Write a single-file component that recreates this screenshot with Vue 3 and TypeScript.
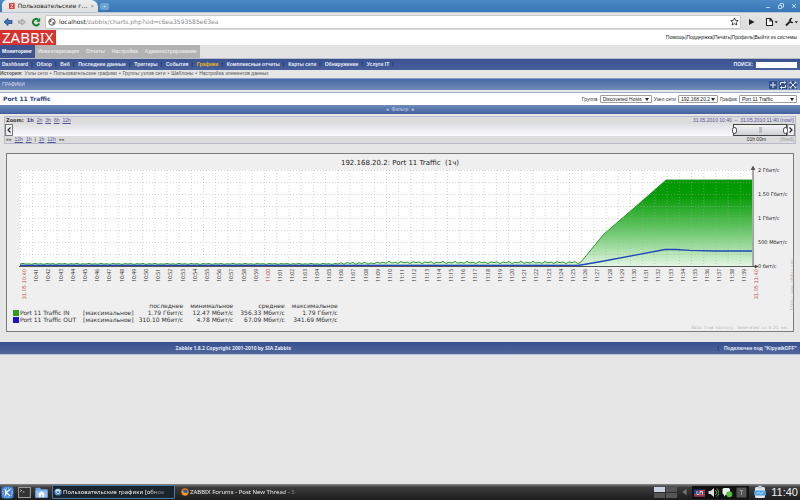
<script setup lang="ts">
import { ref } from 'vue'

const sections = ['Инвентаризация', 'Отчеты', 'Настройка', 'Администрирование']
const pages = [
  'Dashboard', 'Обзор', 'Веб', 'Последние данные', 'Триггеры', 'События',
  'Графики', 'Комплексные отчеты', 'Карты сети', 'Обнаружение', 'Услуги IT',
]
const history = ['Узлы сети', 'Пользовательские графики', 'Группы узлов сети', 'Шаблоны', 'Настройка элементов данных']
const account = ['Помощь', 'Поддержка', 'Печать', 'Профиль', 'Выйти из системы']
const zooms = ['2h', '3h', '6h', '12h']
const search = ref('')

const legend = [
  { color: '#2f9a1c', name: 'Port 11 Traffic IN', fn: '[максимальное]', last: '1.79 Гбит/с', min: '12.47 Мбит/с', avg: '356.33 Мбит/с', max: '1.79 Гбит/с' },
  { color: '#2010c8', name: 'Port 11 Traffic OUT', fn: '[максимальное]', last: '310.10 Мбит/с', min: '4.78 Мбит/с', avg: '67.09 Мбит/с', max: '341.69 Мбит/с' },
]

interface Tick { x: number; text: string; major: boolean }
const STEP = 12.2
const ticks: Tick[] = Array.from({ length: 61 }, (_, i) => {
  const minute = 40 + i
  const time = minute < 60 ? `10:${minute}` : `11:${String(minute - 60).padStart(2, '0')}`
  const edge = i === 0 || i === 60
  return { x: 26 + i * STEP, text: edge ? `31.05 ${time}` : time, major: edge || i === 20 }
})
const columns = Array.from({ length: 60 }, (_, i) => 20.5 + i * STEP)
const rows = Array.from({ length: 8 }, (_, i) => 170.5 + i * 12)
const levels = [
  { y: 172, text: '2 Гбит/с' },
  { y: 196, text: '1.50 Гбит/с' },
  { y: 220, text: '1 Гбит/с' },
  { y: 244, text: '500 Мбит/с' },
  { y: 268, text: '0 бит/с' },
]

// Idle traffic: a low ripple that gets stronger in the second half of the period
const idle: string[] = []
for (let x = 20, i = 0; x < 580; x += 3, i++) {
  const base = x < 340 ? 263.9 : x < 380 ? 263.2 : 262.5
  const swing = x < 340 ? 0.5 : 1.1
  idle.push(`${x},${(base + (i % 2 ? -swing : swing) * (0.6 + 0.4 * Math.sin(i * 1.7))).toFixed(1)}`)
}
const incoming = [...idle, '581,262', '604,234', '634,208', '666,180', '752,180'].join(' ')
const outgoing = '20,265.5 578,265.5 604,261 665,249.5 676,249.5 690,250.3 715,251 752,251'
</script>

<template>
  <div class="screen">
    <header class="browser">
      <div class="tabs">
        <div class="tab">
          <svg class="fav" viewBox="0 0 6 6"><rect width="6" height="6" fill="#d8342c" /><path d="M1.4 1.6h3L1.6 4.4h3" stroke="#fff" stroke-width=".7" fill="none" /></svg>
          <span class="tab-title">Пользовательские г…</span>
          <button class="bare tab-close" aria-label="Закрыть вкладку">×</button>
        </div>
        <button class="bare new-tab" aria-label="Новая вкладка">+</button>
        <div class="window-buttons">
          <button class="bare" aria-label="Свернуть"><svg viewBox="0 0 6 6"><path d="M1 4.5h4" /></svg></button>
          <button class="bare" aria-label="Развернуть"><svg viewBox="0 0 6 6"><path d="M.5 2.5h3v3h-3zM2 2V.6h3.5v3.5H4" /></svg></button>
          <button class="bare" aria-label="Закрыть"><svg viewBox="0 0 6 6"><path d="M1 1l4 4M5 1L1 5" /></svg></button>
        </div>
      </div>
      <div class="toolbar">
        <button class="bare" aria-label="Назад"><svg class="nav" viewBox="0 0 10 10"><path d="M5 1.5v2h4v3H5v2L1 5z" fill="#3f74b8" stroke="#24477e" stroke-width=".8" /></svg></button>
        <button class="bare" aria-label="Вперед"><svg class="nav" viewBox="0 0 10 10"><path d="M5 2v1.8H1.5v2.4H5V8l3.5-3z" fill="#c4c4c4" stroke="#9b9b9b" stroke-width=".8" /></svg></button>
        <button class="bare" aria-label="Обновить"><svg class="nav" viewBox="0 0 10 10"><path d="M8.2 6.4A3.3 3.3 0 1 1 7 2.4" fill="none" stroke="#19802a" stroke-width="2" /><path d="M9.2.7v4H5z" fill="#19802a" /></svg></button>
        <div class="omnibox">
          <svg class="globe" viewBox="0 0 8 8"><circle cx="4" cy="4" r="3.2" fill="#fff" stroke="#444" stroke-width=".9" /><path d="M2 1.6l1.8.6L3 4l-1.6.6M4.6 3.6l2 .6-1 2-1.2-.8z" fill="#666" /></svg>
          <span class="url"><b>localhost</b>/zabbix/charts.php?sid=c6ea3593585e63ea</span>
          <svg class="star" viewBox="0 0 10 10"><path d="M5 1l1.2 2.7 2.9.3-2.2 2 .7 2.9L5 7.4 2.4 8.9 3.1 6 .9 4l2.9-.3z" fill="#fff" stroke="#222" stroke-width=".9" /></svg>
        </div>
        <div class="tools">
          <button class="bare" aria-label="Перейти"><svg class="tool" viewBox="0 0 13 10"><path d="M4 2l5.5 3L4 8z" fill="#222" /></svg></button>
          <button class="bare" aria-label="Страница"><svg class="tool" viewBox="0 0 13 10"><path d="M1.5 1.5h4L7.5 4v4.500h-6zM5 1.5V4h2.5" fill="#fff" stroke="#222" stroke-width="1.1" /><path d="M9.5 4.2h3.4l-1.7 2z" fill="#222" /></svg></button>
          <button class="bare" aria-label="Настройки"><svg class="tool" viewBox="0 0 13 10"><path d="M1 8.5l4-4" stroke="#222" stroke-width="1.8" /><path d="M7.5 1A2.6 2.6 0 1 0 8.6 5.3L6.3 4.6 5.9 3z" fill="#222" /><path d="M9.6 4.2H13l-1.7 2z" fill="#222" /></svg></button>
        </div>
      </div>
    </header>

    <div class="brand-row">
      <a class="logo" href="#">ZABBIX</a>
      <nav class="account">
        <template v-for="(item, i) in account" :key="item"><span v-if="i">|</span><a href="#">{{ item }}</a></template>
      </nav>
    </div>

    <nav class="sections">
      <a class="section current" href="#">Мониторинг</a>
      <div class="others"><a v-for="s in sections" :key="s" href="#">{{ s }}</a></div>
    </nav>

    <nav class="pages">
      <a v-for="p in pages" :key="p" href="#" :class="{ active: p === 'Графики' }">{{ p }}</a>
      <label class="search">ПОИСК:<input v-model="search" type="text" /></label>
    </nav>

    <nav class="history">
      <b>История:</b>
      <template v-for="(h, i) in history" :key="h"><i v-if="i">•</i><a href="#">{{ h }}</a></template>
    </nav>

    <div class="page-head">
      <span>ГРАФИКИ</span>
      <div class="head-icons">
        <button class="bare" aria-label="Добавить"><svg viewBox="0 0 8 8"><path d="M4 1v6M1 4h6" /></svg></button>
        <button class="bare" aria-label="Сбросить"><svg viewBox="0 0 8 8"><path d="M1.500 4V1.500H6.500M5 .5l1.500 1L5 2.500M6.500 4v2.500H1.500M3 5.500l-1.500 1L3 7.500" /></svg></button>
        <button class="bare" aria-label="На весь экран"><svg viewBox="0 0 8 8"><path d="M1 1l6 6M7 1L1 7M1 2.500V1h1.500M5.500 1H7v1.500M7 5.500V7H5.500M2.500 7H1V5.500" /></svg></button>
      </div>
    </div>

    <div class="title-row">
      <h1>Port 11 Traffic</h1>
      <form class="filters" @submit.prevent>
        <label for="group">Группа</label>
        <span class="pick group"><select id="group"><option>Discovered Hosts</option></select></span>
        <label for="host">Узел сети</label>
        <span class="pick host"><select id="host"><option>192.168.20.2</option></select></span>
        <label for="graph">График</label>
        <span class="pick graph"><select id="graph"><option>Port 11 Traffic</option></select></span>
      </form>
    </div>
    <button class="bare filter-bar">◂&nbsp; Фильтр &nbsp;◂</button>

    <section class="timeline">
      <div class="line">
        <div class="links"><b>Zoom:</b><b class="on">1h</b><a v-for="z in zooms" :key="z" href="#">{{ z }}</a></div>
        <div class="period">31.05.2010 10:40 &nbsp;–&nbsp; 31.05.2010 11:40 (now!)</div>
      </div>
      <div class="track">
        <button class="bare arrow" aria-label="Раньше"><svg viewBox="0 0 6 10"><path d="M4.5 2.5L2 5l2.5 2.5" /></svg></button>
        <div class="rail">
          <div class="thumb"><i class="knob"></i><span class="grip"></span><i class="knob"></i></div>
        </div>
        <button class="bare arrow" aria-label="Позже"><svg viewBox="0 0 6 10"><path d="M1.5 2.5L4 5 1.5 7.5" /></svg></button>
      </div>
      <div class="line">
        <div class="links"><span>««</span><a href="#">12h</a><a href="#">1h</a><span>|</span><a href="#">1h</a><a href="#">12h</a><span>»»</span></div>
        <div class="span"><span>01h 00m</span><a href="#">(fixed)</a></div>
      </div>
    </section>

    <main class="graph-box">
      <svg class="plot" viewBox="7 154 786 148" role="img" aria-label="Port 11 Traffic">
        <defs>
          <linearGradient id="fill" gradientUnits="userSpaceOnUse" x1="0" y1="180" x2="0" y2="266">
            <stop offset="0" stop-color="#009900" />
            <stop offset=".18" stop-color="#049b04" />
            <stop offset=".6" stop-color="#6cc86c" />
            <stop offset="1" stop-color="#e2f6e2" />
          </linearGradient>
        </defs>
        <text class="caption" x="400" y="164.5" text-anchor="middle">192.168.20.2: Port 11 Traffic&nbsp; (1ч)</text>
        <rect x="20" y="170" width="733" height="96" fill="#fff" />
        <polygon :points="`20,266 ${incoming} 752,266`" fill="url(#fill)" />
        <g class="grid">
          <line v-for="c in columns" :key="c" :x1="c" :x2="c" y1="170" y2="266" />
          <line v-for="r in rows" :key="r" x1="20" x2="752" :y1="r" :y2="r" />
        </g>
        <rect x="20" y="264.5" width="560" height="1.5" fill="#9ec4e0" />
        <polyline :points="incoming" class="in" />
        <polyline :points="outgoing" class="out" />
        <path d="M19 266.500h737M753 166.500V266" stroke="#555" fill="none" />
        <path d="M751 169.500l2-3 2 3zM755 265l3 1.500-3 1.500z" fill="#555" stroke="#333" stroke-width=".5" />
        <text v-for="l in levels" :key="l.y" class="level" x="758" :y="l.y">{{ l.text }}</text>
        <text
          v-for="t in ticks" :key="t.text" :class="['tick', { major: t.major, wide: t.text.length > 5 }]"
          :transform="`translate(${t.x} 269) rotate(-90)`" text-anchor="end"
        >{{ t.text }}</text>
        <text class="site" transform="translate(793 310) rotate(-90)">http://www.zabbix.com</text>
      </svg>
      <table class="legend">
        <thead>
          <tr><th></th><th></th><th>последнее</th><th>минимальное</th><th>среднее</th><th>максимальное</th></tr>
        </thead>
        <tbody>
          <tr v-for="row in legend" :key="row.name">
            <td><i class="swatch" :style="{ background: row.color }"></i>{{ row.name }}</td>
            <td>{{ row.fn }}</td><td>{{ row.last }}</td><td>{{ row.min }}</td><td>{{ row.avg }}</td><td>{{ row.max }}</td>
          </tr>
        </tbody>
      </table>
      <p class="note">Data from history. Generated in 0.21 sec</p>
    </main>

    <footer class="foot">
      <span class="copy">Zabbix 1.8.2 Copyright 2001-2010 by SIA Zabbix</span>
      <span class="user"><i>|</i>Подключен под "KipyatkOFF"</span>
    </footer>

    <div class="taskbar">
      <button class="bare" aria-label="Меню"><svg class="launch" viewBox="0 0 14 14"><rect x=".5" y=".5" width="13" height="13" rx="3" fill="#3d7fd0" /><circle cx="7" cy="7" r="5" fill="none" stroke="#8fc0f4" stroke-width="1.6" stroke-dasharray="1.6 1" /><path d="M5 3.500v7M9.500 3.800L5.600 7l4 3.500" fill="none" stroke="#fff" stroke-width="1.5" /></svg></button>
      <button class="bare" aria-label="Терминал"><svg class="launch" viewBox="0 0 14 14"><rect x=".7" y="1.5" width="12.6" height="11" fill="#333" stroke="#aaa" stroke-width="1" /><path d="M2.500 4l1.500 1-1.500 1M5 6.500h2" fill="none" stroke="#ddd" stroke-width=".8" /></svg></button>
      <button class="bare" aria-label="Папка"><svg class="launch" viewBox="0 0 14 14"><path d="M.5 2h5l1 1.500h7v9H.5z" fill="#6fa8ea" /><path d="M.5 5h13v7.500H.5z" fill="#8fbdf4" /><path d="M7 5.500L3 9h1.200v3h2V9.500h1.600V12h2V9H11z" fill="#fff" /></svg></button>
      <button class="bare task focus">
        <svg viewBox="0 0 8 8"><circle cx="4" cy="4" r="3.6" fill="#5a8fc8" /><path d="M.8 3.200C2.200.6 5.800.6 7.200 3L4 3.200z" fill="#d6e4f2" /><circle cx="4" cy="4.2" r="1.5" fill="#2962aa" stroke="#fff" stroke-width=".7" /></svg>
        <span>Пользовательские графики [обнов</span>
      </button>
      <button class="bare task">
        <svg viewBox="0 0 8 8"><circle cx="4" cy="4" r="3.7" fill="#e8741c" /><circle cx="4.3" cy="3.7" r="2.2" fill="#2e5ea8" /><path d="M.6 3C2 3 2.400 4.600 4 5c1.200.2 2-.4 2.500-1 .3 2-1 3.300-2.500 3.300S.8 6 .6 3z" fill="#f4a02c" /></svg>
        <span>ZABBIX Forums - Post New Thread - S</span>
      </button>
      <div class="tray">
        <div class="pager"><i class="here"></i><i></i><i></i><i></i></div>
        <svg class="t-arrow" viewBox="0 0 6 8"><path d="M5.500 0v8L.5 4z" fill="#777" /></svg>
        <div class="status">
          <svg viewBox="0 0 11 11"><rect y="2.5" width="11" height="7" fill="#27408c" /><path d="M4.500 3.500H11M4.500 5.500H11M0 7.500h11M0 9h11" stroke="#d8382c" stroke-width="1.2" /><path d="M3 4v3.500h2M6 7.500V4.500h2.500v3" fill="none" stroke="#fff" stroke-width=".8" /></svg>
          <svg viewBox="0 0 11 11"><path d="M.5 4h2L6 1v9L2.500 7h-2z" fill="#ddd" /><path d="M7.500 3c1.500 1.500 1.500 3.500 0 5M9 1.500c2.200 2.500 2.200 5.500 0 8" fill="none" stroke="#5fb35a" stroke-width="1" /></svg>
          <svg viewBox="0 0 11 11"><rect x=".5" y="1" width="7.5" height="6.5" rx="1.5" fill="#e8f2e8" /><circle cx="7.3" cy="7.3" r="3" fill="#5cba3c" /><path d="M2 7v2.500L4.500 7z" fill="#e8f2e8" /></svg>
          <svg viewBox="0 0 11 11"><rect x=".5" y=".5" width="10" height="10" fill="#555" /><path d="M5.500 3v5M4 3.500h3" stroke="#999" stroke-width="1" /></svg>
        </div>
        <svg class="clip" viewBox="0 0 12 14"><rect x="1" y="2" width="10" height="11" rx="1.5" fill="#dfe5ea" /><rect x="4" y=".5" width="4" height="3" rx="1" fill="#b9c4cc" /><rect x="0" y="5.5" width="12" height="5" rx="1" fill="#4d9fe0" /><path d="M2.500 9l2-2 2 2 3-2" fill="none" stroke="#fff" stroke-width=".7" /></svg>
        <time class="clock">11:40</time>
      </div>
    </div>
  </div>
</template>

<style>
body {
  background: #e6e6e6;
}
</style>

<style scoped>
.screen {
  min-height: 100vh;
  display: flex;
  flex-direction: column;
  font: 5px/7px 'Liberation Sans', sans-serif;
  color: #333;
  background: #e6e6e6;
  white-space: nowrap;
}
a {
  color: inherit;
  text-decoration: none;
}
i {
  font-style: normal;
}
svg {
  display: block;
}
.bare {
  border: 0;
  padding: 0;
  margin: 0;
  background: none;
  font: inherit;
  color: inherit;
}

/* Browser chrome */
.tabs {
  display: flex;
  align-items: center;
  height: 12px;
  padding-left: 2px;
  background: linear-gradient(#4b8ac4, #3a76b6);
}
.tab {
  display: flex;
  align-items: center;
  gap: 3px;
  width: 96px;
  height: 12px;
  box-sizing: border-box;
  padding: 0 4px 0 7px;
  border-radius: 5px 7px 0 0;
  background: linear-gradient(#eeeeee, #dedede);
}
.fav {
  width: 6px;
  height: 6px;
}
.tab-title {
  flex: 1;
  font: 6px/10px 'DejaVu Sans', sans-serif;
  color: #222;
}
.tab-close {
  font-size: 6px;
  color: #888;
}
.new-tab {
  width: 9px;
  height: 7px;
  margin-left: 2px;
  border-radius: 2px;
  background: #6ea3d4;
  color: #dcecf8;
  line-height: 6px;
}
.window-buttons {
  display: flex;
  gap: 7px;
  margin-left: auto;
  padding-right: 3px;
}
.window-buttons svg {
  width: 6px;
  height: 6px;
  fill: none;
  stroke: #c4dcf2;
  stroke-width: 0.9;
}
.toolbar {
  display: flex;
  align-items: center;
  gap: 4px;
  height: 15px;
  padding: 1px 2px 1px 3px;
  border-top: 1px solid #b9c6d4;
  background: linear-gradient(#e4e4e4, #dcdcdc);
}
.toolbar .nav {
  width: 10px;
  height: 10px;
}
.omnibox {
  display: flex;
  align-items: center;
  flex: 1;
  gap: 3px;
  height: 12px;
  padding: 0 1px 0 2px;
  border: 1px solid #c8c8c8;
  border-radius: 2px;
  background: #fff;
  font: 6px/12px 'DejaVu Sans', sans-serif;
  color: #888;
}
.omnibox b {
  font-weight: 400;
  color: #222;
}
.globe {
  width: 8px;
  height: 8px;
}
.star {
  width: 9px;
  height: 9px;
  margin-left: auto;
}
.tools {
  display: flex;
  gap: 7px;
}
.tool {
  width: 13px;
  height: 10px;
}

/* Site header */
.brand-row {
  display: flex;
  justify-content: space-between;
  align-items: center;
  height: 15px;
  background: #fff;
}
.logo {
  padding: 0 2px;
  background: #d8322e;
  color: #fff;
  font: 15px/15px 'Noto Sans', sans-serif;
}
.account {
  padding-right: 3px;
  color: #222;
}
.sections {
  display: flex;
  height: 13px;
  border-bottom: 1px solid #b4bccc;
  background: #e3e3e3;
  font: bold 5px/13px 'Liberation Sans', sans-serif;
  color: #e6e6e6;
}
.section.current {
  padding: 0 3px 0 2px;
  background: #3d5490;
  color: #fff;
}
.others {
  display: flex;
  gap: 7px;
  padding: 0 3px;
  background: #b2b2b2;
}
.pages {
  display: flex;
  align-items: center;
  height: 11px;
  background: linear-gradient(#3a5390, #47609c);
  font: bold 5px/11px 'Liberation Sans', sans-serif;
  color: #e8ecf6;
  padding: 0 3px 0 2px;
}
.pages > a::after {
  content: '|';
  margin: 0 4px 0 3px;
  color: #1d2f5e;
}
.pages .active {
  color: #e8b820;
}
.search {
  display: flex;
  align-items: center;
  gap: 3px;
  margin-left: auto;
}
.search input {
  width: 41px;
  height: 6px;
  border: 0;
  padding: 0;
  background: #fff;
  font: inherit;
}
.history {
  display: flex;
  gap: 2px;
  height: 7px;
  color: #555;
}
.page-head {
  display: flex;
  justify-content: space-between;
  align-items: center;
  height: 11px;
  margin-top: 1px;
  padding: 0 3px 0 2px;
  border-top: 1px solid #8b9dc6;
  background: linear-gradient(#496aa6, #7089b8);
  color: #d6def0;
}
.head-icons {
  display: flex;
  gap: 2px;
}
.head-icons svg {
  width: 8px;
  height: 8px;
  background: #334f8c;
  fill: none;
  stroke: #e4ecfa;
  stroke-width: 1;
}
.title-row {
  display: flex;
  justify-content: space-between;
  align-items: center;
  height: 12px;
  margin-top: 2px;
  padding: 0 3px;
  border-top: 1px solid #9fb0cf;
  background: #fff;
}
h1 {
  margin: 0;
  font: bold 6px/12px 'DejaVu Sans', sans-serif;
  color: #33497f;
}
.filters {
  display: flex;
  align-items: center;
  gap: 2px;
}
.pick {
  position: relative;
  display: flex;
}
.pick::after {
  content: '';
  position: absolute;
  right: 3px;
  top: 3px;
  border: 2px solid transparent;
  border-top: 3px solid #222;
  border-bottom: 0;
  pointer-events: none;
}
.pick select {
  appearance: none;
  width: 100%;
  height: 8px;
  padding: 0 2px;
  border: 1px solid #9c9c9c;
  border-radius: 1px;
  background: #fff;
  font: inherit;
  line-height: 6px;
  color: #222;
}
.pick.group {
  width: 52px;
}
.pick.host {
  width: 40px;
}
.pick.graph {
  width: 58px;
}
.filter-bar {
  height: 9px;
  background: linear-gradient(#6f8bbb, #44609c);
  color: #c2d0ea;
  text-align: center;
}

/* Time line */
.timeline {
  margin: 2px 4px 0;
  border: 1px solid #b9b9cc;
  background: #dcdcdc;
  font-size: 5px;
}
.line {
  display: flex;
  justify-content: space-between;
  align-items: center;
  height: 7px;
  padding: 0 1px;
  color: #333;
}
.links {
  display: flex;
  gap: 3px;
}
.links b {
  font: bold 5px/7px 'DejaVu Sans', sans-serif;
}
.links .on {
  color: #2f3f78;
}
.links a {
  color: #55559a;
  text-decoration: underline;
}
.period {
  color: #55559a;
}
.track {
  display: flex;
  height: 12px;
  background: linear-gradient(#dfe0e4, #fbfbfb);
}
.arrow {
  width: 8px;
  border: 1px solid #777;
  background: #eee;
}
.arrow svg {
  width: 6px;
  height: 10px;
  fill: none;
  stroke: #222;
  stroke-width: 1.1;
}
.rail {
  display: flex;
  flex: 1;
  justify-content: flex-end;
}
.thumb {
  display: flex;
  align-items: center;
  justify-content: space-between;
  width: 54px;
  box-sizing: border-box;
  border: 1px solid #444;
  background: linear-gradient(#f4f4f6, #cfd0d6);
}
.knob {
  width: 3px;
  height: 5px;
  margin: 0 -2px;
  border: 1px solid #444;
  border-radius: 3px;
  background: #fff;
}
.grip {
  width: 3px;
  height: 6px;
  background: #bbb;
}
.span {
  display: flex;
  gap: 14px;
}
.span a {
  color: #999;
}

/* Graph */
.graph-box {
  margin: 9px 6px 0;
  border: 1px solid #7c7c7c;
  background: #efefef;
  font-family: 'DejaVu Sans', sans-serif;
}
.plot {
  width: 100%;
  overflow: visible;
}
.caption {
  font-size: 7px;
  fill: #222;
}
.grid line {
  stroke: #a8a8a8;
  stroke-width: 1;
  stroke-opacity: 0.5;
  stroke-dasharray: 1 2;
}
.in {
  fill: none;
  stroke: #2f9a2f;
  stroke-width: 1;
}
.out {
  fill: none;
  stroke: #2148b4;
  stroke-width: 1.3;
}
.level {
  font-size: 5px;
  fill: #222;
}
.tick {
  font: 5px 'Noto Sans', sans-serif;
  fill: #333;
}
.tick.wide {
  font-family: 'DejaVu Sans', sans-serif;
}
.tick.major {
  fill: #c04444;
}
.site {
  font: 4px 'DejaVu Sans Mono', monospace;
  fill: #b8b8b8;
}
.legend {
  border-collapse: collapse;
  margin-left: 6px;
  font-size: 6px;
  line-height: 7px;
  color: #333;
}
.legend th,
.legend td {
  padding: 0 0 0 7px;
  font-weight: 400;
  text-align: right;
}
.legend td:first-child {
  padding: 0;
  text-align: left;
}
.legend td:nth-child(2) {
  text-align: left;
}
.legend td:nth-child(3) {
  padding-left: 5px;
}
.swatch {
  display: inline-block;
  width: 6px;
  height: 6px;
  margin-right: 1px;
  vertical-align: -1px;
}
.note {
  margin: 0;
  padding: 2px 5px 0;
  text-align: right;
  font: 4px/6px 'DejaVu Sans Mono', monospace;
  color: #b4b4b4;
}
.foot {
  display: grid;
  grid-template-columns: 7fr 5fr;
  margin-top: 10px;
  border-bottom: 1px solid #b8c2d8;
  background: linear-gradient(#364f8c, #4f689e);
  font: bold 5px/12px 'Noto Sans', sans-serif;
  color: #e2e8f4;
}
.copy {
  text-align: center;
}
.user {
  padding-right: 3px;
  text-align: right;
  font-family: 'Liberation Sans', sans-serif;
}
.user i {
  margin-right: 5px;
  color: #1d2f5e;
}

/* Desktop panel */
.taskbar {
  display: flex;
  align-items: center;
  gap: 4px;
  height: 16px;
  margin-top: auto;
  padding: 0 2px 0 1px;
  background: linear-gradient(#8a8a8a, #3c3c3c 20%, #1c1c1c);
  color: #eee;
}
.launch {
  width: 13px;
  height: 13px;
}
.task {
  display: flex;
  align-items: center;
  gap: 1px;
  width: 123px;
  height: 14px;
  box-sizing: border-box;
  padding: 0 2px 0 1px;
  border: 1px solid transparent;
  font: 6px/12px 'Noto Sans', sans-serif;
}
.task svg {
  flex: none;
  width: 8px;
  height: 8px;
}
.task span {
  -webkit-mask-image: linear-gradient(90deg, #000 85%, rgba(0, 0, 0, 0.3));
  mask-image: linear-gradient(90deg, #000 85%, rgba(0, 0, 0, 0.3));
}
.task.focus {
  border-color: #4a7aa0;
  border-radius: 1px;
  background: #1a242c;
}
.tray {
  display: flex;
  align-items: center;
  gap: 5px;
  margin-left: auto;
}
.pager {
  display: grid;
  grid-template-columns: 11px 11px;
  gap: 1px;
}
.pager i {
  height: 5px;
  background: #555;
}
.pager .here {
  background: #c8d2e0;
}
.t-arrow {
  width: 5px;
  height: 8px;
}
.status {
  display: flex;
  gap: 3px;
  padding: 1px 2px;
  background: #111;
}
.status svg {
  width: 11px;
  height: 11px;
}
.clip {
  width: 12px;
  height: 14px;
}
.clock {
  font: 11px/14px 'Liberation Sans', sans-serif;
}
</style>
